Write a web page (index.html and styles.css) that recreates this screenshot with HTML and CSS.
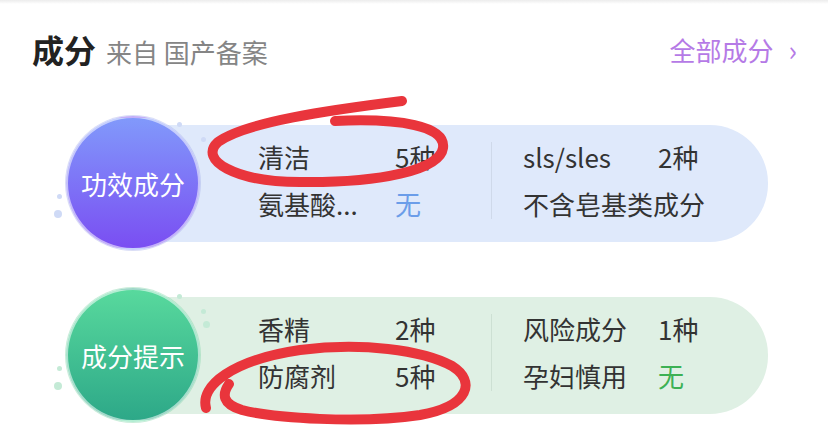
FILE: index.html
```html
<!DOCTYPE html>
<html lang="zh-CN">
<head>
    <meta charset="UTF-8">
    <meta name="viewport" content="width=device-width, initial-scale=1.0">
    <title>成分</title>
    <link rel="stylesheet" href="styles.css">
</head>
<body>
    <div class="top-shade"></div>
    <header class="header">
        <div class="title-wrap">
            <h2 class="title">成分</h2>
            <span class="subtitle">来自 国产备案</span>
        </div>
        <a class="more" href="#">全部成分<span class="chev">›</span></a>
    </header>

    <section class="cards">
        <div class="card card-blue">
            <span class="dot d1"></span>
            <span class="dot d2"></span>
            <span class="dot d3"></span>
            <span class="dot d4"></span>
            <div class="badge">功效成分</div>
            <div class="panel">
                <div class="col">
                    <div class="row"><span class="name">清洁</span><span class="val">5种</span></div>
                    <div class="row"><span class="name">氨基酸...</span><span class="val none-blue">无</span></div>
                </div>
                <div class="divider"></div>
                <div class="col col-right">
                    <div class="row"><span class="name">sls/sles</span><span class="val">2种</span></div>
                    <div class="row"><span class="name">不含皂基类成分</span></div>
                </div>
            </div>
        </div>

        <div class="card card-green">
            <span class="dot d1"></span>
            <span class="dot d2"></span>
            <span class="dot d5"></span>
            <span class="dot d3"></span>
            <span class="dot d4"></span>
            <div class="badge">成分提示</div>
            <div class="panel">
                <div class="col">
                    <div class="row"><span class="name">香精</span><span class="val">2种</span></div>
                    <div class="row"><span class="name">防腐剂</span><span class="val">5种</span></div>
                </div>
                <div class="divider"></div>
                <div class="col col-right">
                    <div class="row"><span class="name">风险成分</span><span class="val">1种</span></div>
                    <div class="row"><span class="name">孕妇慎用</span><span class="val none-green">无</span></div>
                </div>
            </div>
        </div>
    </section>

    <!-- hand-drawn red marks over the screenshot -->
    <svg class="marks" width="828" height="447" viewBox="0 0 828 447">
        <path d="M402,101 C330,110 245,122 218,142 C198,160 235,182 300,182 C380,183 440,170 443,148 C446,126 400,118 335,121" />
        <path d="M206,408 C200,386 232,360 300,350 C362,342 422,350 452,366 C476,381 470,406 420,415 C360,424 272,418 242,410 C222,404 222,394 229,384" />
    </svg>
</body>
</html>
```

FILE: styles.css
```css
body {
    margin: 0;
    padding: 0;
    background: #fff;
    font-family: "Noto Sans CJK SC", "Noto Sans", sans-serif;
    color: #333;
    position: relative;
    width: 828px;
    height: 447px;
    overflow: hidden;
}
.top-shade {
    height: 4px;
    background: linear-gradient(#ececec, #fff);
}
.header {
    display: flex;
    justify-content: space-between;
    align-items: center;
    height: 90px;
    padding: 0 31px 0 32px;
}
.title-wrap {
    display: flex;
    align-items: baseline;
    gap: 10px;
}
.title {
    margin: 0;
    font-size: 32px;
    font-weight: 700;
    color: #222;
}
.subtitle {
    font-size: 26px;
    color: #858585;
}
.more {
    font-size: 26px;
    color: #b57ae6;
    text-decoration: none;
    display: flex;
    align-items: center;
}
.more .chev {
    margin-left: 15px;
    font-size: 28px;
}
.cards {
    display: flex;
    flex-direction: column;
    gap: 38px;
    padding: 22px 0 0 66px;
}
.card {
    position: relative;
    display: flex;
    align-items: center;
    width: 702px;
}
.badge {
    position: relative;
    z-index: 1;
    flex: none;
    width: 130px;
    height: 130px;
    border-radius: 50%;
    border: 2px solid rgba(255, 255, 255, 0.55);
    box-shadow: 0 0 0 1px rgba(150, 160, 230, 0.35);
    display: flex;
    align-items: center;
    justify-content: center;
    color: #fff;
    font-size: 26px;
}
.card-blue .badge {
    background: linear-gradient(#8199fb, #7a4ef2);
}
.card-green .badge {
    background: linear-gradient(#58d99d, #2da888);
    box-shadow: 0 0 0 1px rgba(120, 210, 160, 0.4);
}
.panel {
    flex: 1;
    height: 117px;
    margin-left: -50px;
    padding: 0 0 6px 108px;
    border-radius: 0 58px 58px 0;
    display: flex;
    align-items: center;
    box-sizing: border-box;
}
.card-blue .panel {
    background: #dfe9fb;
}
.card-green .panel {
    background: #dff0e4;
}
.col {
    width: 233px;
}
.col-right {
    padding-left: 31px;
}
.row {
    display: flex;
    height: 47px;
    align-items: center;
    font-size: 26px;
    color: #333;
    white-space: nowrap;
}
.row .name {
    width: 137px;
}
.col-right .row .name {
    width: 135px;
}
.row .val {
    color: #333;
}
.none-blue {
    color: #6b9de9 !important;
}
.none-green {
    color: #3cb154 !important;
}
.divider {
    width: 1px;
    height: 77px;
    background: #cfd9ea;
}
.card-green .divider {
    background: #cde0d3;
}
.dot {
    position: absolute;
    border-radius: 50%;
    width: 5px;
    height: 5px;
}
.card-blue .dot {
    background: #cfdaf6;
}
.card-green .dot {
    background: #c4ead6;
}
.dot.d1 { left: 111px; top: 6px; }
.dot.d2 { left: 135px; top: 21px; }
.dot.d5 { left: 137px; top: 33px; width: 7px; height: 7px; }
.dot.d3 { left: -9px; top: 78px; }
.dot.d4 { left: -12px; top: 94px; width: 8px; height: 8px; }
.marks {
    position: absolute;
    left: 0;
    top: 0;
    pointer-events: none;
}
.marks path {
    fill: none;
    stroke: #e9353c;
    stroke-width: 10;
    stroke-linecap: round;
    stroke-linejoin: round;
}
```
